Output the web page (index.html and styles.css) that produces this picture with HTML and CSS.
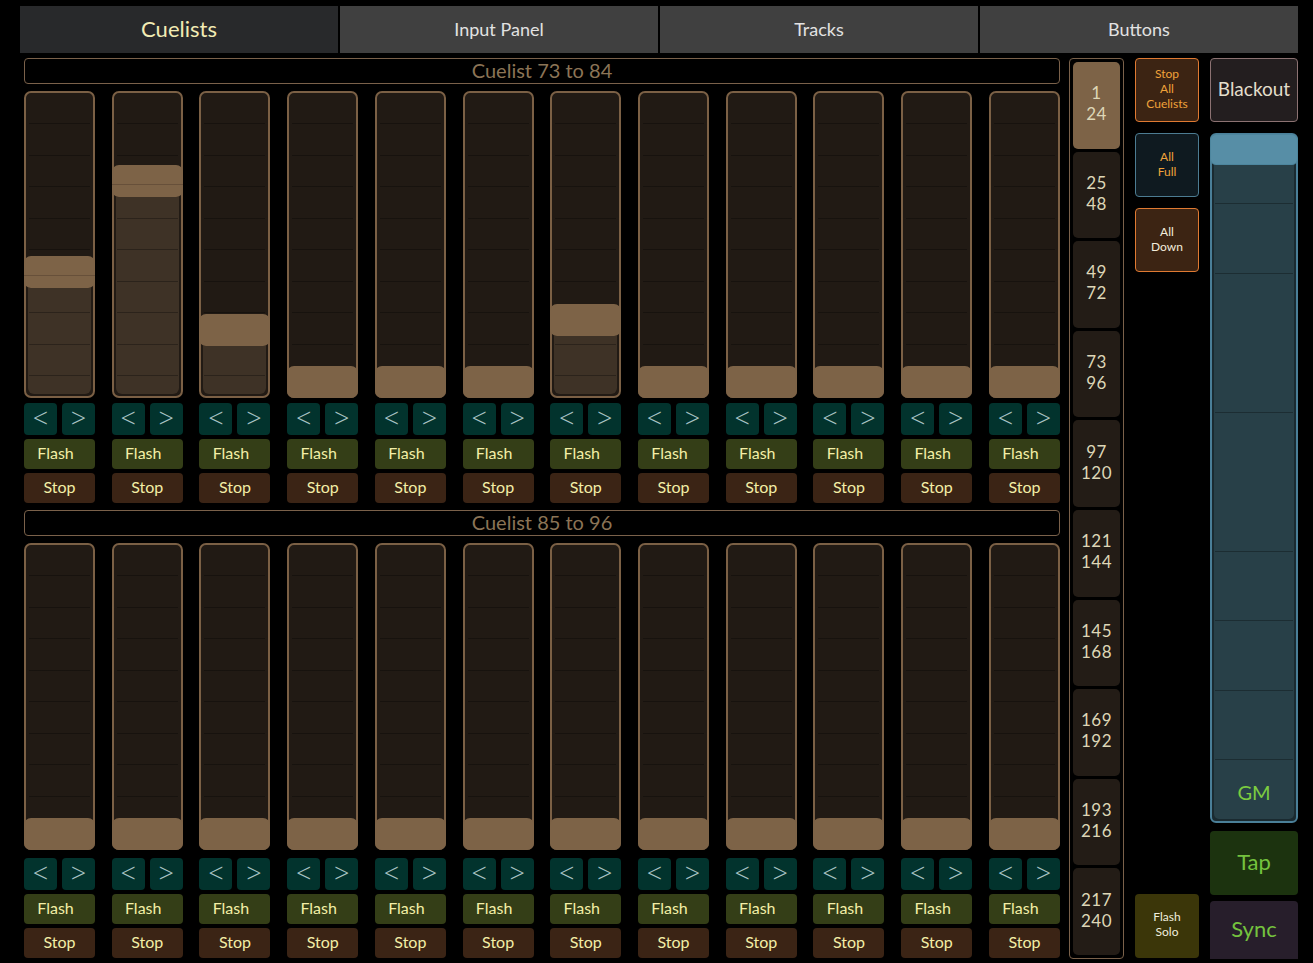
FILE: index.html
```html
<!DOCTYPE html>
<html>
<head>
<meta charset="utf-8">
<link rel="stylesheet" href="styles.css">
</head>
<body>
<div class="tabs">
  <div class="tab active">Cuelists</div>
  <div class="tab">Input Panel</div>
  <div class="tab">Tracks</div>
  <div class="tab">Buttons</div>
</div>
<div class="main">
  <div class="banks">
    <section class="bank">
      <div class="bank-title">Cuelist 73 to 84</div>
      <div class="faders">
        <div class="col"><div class="fader"><div class="handle marked"></div><div class="fill" style="height:106px"></div></div><div class="nav"><div class="btn arrow">&lt;</div><div class="btn arrow">&gt;</div></div><div class="btn flash">Flash</div><div class="btn stop">Stop</div></div>
        <div class="col"><div class="fader"><div class="handle marked"></div><div class="fill" style="height:197px"></div></div><div class="nav"><div class="btn arrow">&lt;</div><div class="btn arrow">&gt;</div></div><div class="btn flash">Flash</div><div class="btn stop">Stop</div></div>
        <div class="col"><div class="fader"><div class="handle"></div><div class="fill" style="height:48px"></div></div><div class="nav"><div class="btn arrow">&lt;</div><div class="btn arrow">&gt;</div></div><div class="btn flash">Flash</div><div class="btn stop">Stop</div></div>
        <div class="col"><div class="fader"><div class="handle end"></div></div><div class="nav"><div class="btn arrow">&lt;</div><div class="btn arrow">&gt;</div></div><div class="btn flash">Flash</div><div class="btn stop">Stop</div></div>
        <div class="col"><div class="fader"><div class="handle end"></div></div><div class="nav"><div class="btn arrow">&lt;</div><div class="btn arrow">&gt;</div></div><div class="btn flash">Flash</div><div class="btn stop">Stop</div></div>
        <div class="col"><div class="fader"><div class="handle end"></div></div><div class="nav"><div class="btn arrow">&lt;</div><div class="btn arrow">&gt;</div></div><div class="btn flash">Flash</div><div class="btn stop">Stop</div></div>
        <div class="col"><div class="fader"><div class="handle"></div><div class="fill" style="height:58px"></div></div><div class="nav"><div class="btn arrow">&lt;</div><div class="btn arrow">&gt;</div></div><div class="btn flash">Flash</div><div class="btn stop">Stop</div></div>
        <div class="col"><div class="fader"><div class="handle end"></div></div><div class="nav"><div class="btn arrow">&lt;</div><div class="btn arrow">&gt;</div></div><div class="btn flash">Flash</div><div class="btn stop">Stop</div></div>
        <div class="col"><div class="fader"><div class="handle end"></div></div><div class="nav"><div class="btn arrow">&lt;</div><div class="btn arrow">&gt;</div></div><div class="btn flash">Flash</div><div class="btn stop">Stop</div></div>
        <div class="col"><div class="fader"><div class="handle end"></div></div><div class="nav"><div class="btn arrow">&lt;</div><div class="btn arrow">&gt;</div></div><div class="btn flash">Flash</div><div class="btn stop">Stop</div></div>
        <div class="col"><div class="fader"><div class="handle end"></div></div><div class="nav"><div class="btn arrow">&lt;</div><div class="btn arrow">&gt;</div></div><div class="btn flash">Flash</div><div class="btn stop">Stop</div></div>
        <div class="col"><div class="fader"><div class="handle end"></div></div><div class="nav"><div class="btn arrow">&lt;</div><div class="btn arrow">&gt;</div></div><div class="btn flash">Flash</div><div class="btn stop">Stop</div></div>
      </div>
    </section>
    <section class="bank lower">
      <div class="bank-title">Cuelist 85 to 96</div>
      <div class="faders">
        <div class="col"><div class="fader"><div class="handle end"></div></div><div class="nav"><div class="btn arrow">&lt;</div><div class="btn arrow">&gt;</div></div><div class="btn flash">Flash</div><div class="btn stop">Stop</div></div>
        <div class="col"><div class="fader"><div class="handle end"></div></div><div class="nav"><div class="btn arrow">&lt;</div><div class="btn arrow">&gt;</div></div><div class="btn flash">Flash</div><div class="btn stop">Stop</div></div>
        <div class="col"><div class="fader"><div class="handle end"></div></div><div class="nav"><div class="btn arrow">&lt;</div><div class="btn arrow">&gt;</div></div><div class="btn flash">Flash</div><div class="btn stop">Stop</div></div>
        <div class="col"><div class="fader"><div class="handle end"></div></div><div class="nav"><div class="btn arrow">&lt;</div><div class="btn arrow">&gt;</div></div><div class="btn flash">Flash</div><div class="btn stop">Stop</div></div>
        <div class="col"><div class="fader"><div class="handle end"></div></div><div class="nav"><div class="btn arrow">&lt;</div><div class="btn arrow">&gt;</div></div><div class="btn flash">Flash</div><div class="btn stop">Stop</div></div>
        <div class="col"><div class="fader"><div class="handle end"></div></div><div class="nav"><div class="btn arrow">&lt;</div><div class="btn arrow">&gt;</div></div><div class="btn flash">Flash</div><div class="btn stop">Stop</div></div>
        <div class="col"><div class="fader"><div class="handle end"></div></div><div class="nav"><div class="btn arrow">&lt;</div><div class="btn arrow">&gt;</div></div><div class="btn flash">Flash</div><div class="btn stop">Stop</div></div>
        <div class="col"><div class="fader"><div class="handle end"></div></div><div class="nav"><div class="btn arrow">&lt;</div><div class="btn arrow">&gt;</div></div><div class="btn flash">Flash</div><div class="btn stop">Stop</div></div>
        <div class="col"><div class="fader"><div class="handle end"></div></div><div class="nav"><div class="btn arrow">&lt;</div><div class="btn arrow">&gt;</div></div><div class="btn flash">Flash</div><div class="btn stop">Stop</div></div>
        <div class="col"><div class="fader"><div class="handle end"></div></div><div class="nav"><div class="btn arrow">&lt;</div><div class="btn arrow">&gt;</div></div><div class="btn flash">Flash</div><div class="btn stop">Stop</div></div>
        <div class="col"><div class="fader"><div class="handle end"></div></div><div class="nav"><div class="btn arrow">&lt;</div><div class="btn arrow">&gt;</div></div><div class="btn flash">Flash</div><div class="btn stop">Stop</div></div>
        <div class="col"><div class="fader"><div class="handle end"></div></div><div class="nav"><div class="btn arrow">&lt;</div><div class="btn arrow">&gt;</div></div><div class="btn flash">Flash</div><div class="btn stop">Stop</div></div>
      </div>
    </section>
  </div>

  <div class="pages">
    <div class="page active"><span>1</span><span>24</span></div>
    <div class="page"><span>25</span><span>48</span></div>
    <div class="page"><span>49</span><span>72</span></div>
    <div class="page"><span>73</span><span>96</span></div>
    <div class="page"><span>97</span><span>120</span></div>
    <div class="page"><span>121</span><span>144</span></div>
    <div class="page"><span>145</span><span>168</span></div>
    <div class="page"><span>169</span><span>192</span></div>
    <div class="page"><span>193</span><span>216</span></div>
    <div class="page"><span>217</span><span>240</span></div>
  </div>

  <div class="actions">
    <div class="act stop-all">Stop<br>All<br>Cuelists</div>
    <div class="act all-full">All<br>Full</div>
    <div class="act all-down">All<br>Down</div>
    <div class="act flash-solo">Flash<br>Solo</div>
  </div>

  <div class="master">
    <div class="blackout">Blackout</div>
    <div class="gm">
      <div class="gm-handle"></div>
      <div class="gm-fill"><span>GM</span></div>
    </div>
    <div class="tap">Tap</div>
    <div class="sync">Sync</div>
  </div>
</div>
</body>
</html>
```
FILE: styles.css
```css
* { box-sizing: border-box; }
body {
  margin: 0;
  background: #000;
  width: 1313px;
  height: 963px;
  overflow: hidden;
  font-family: Lato, "Open Sans", sans-serif;
}
.tabs {
  display: flex;
  gap: 2px;
  margin: 6px 0 0 20px;
  width: 1278px;
  height: 47px;
}
.tab {
  flex: 1;
  background: #404040;
  color: #e2e2e2;
  font-size: 18px;
  display: flex;
  align-items: center;
  justify-content: center;
  padding-bottom: 2px;
}
.tab.active {
  background: #28292b;
  color: #f2ecb4;
  font-size: 22px;
}
.main {
  display: flex;
  margin: 5px 0 0 24px;
}
.banks {
  width: 1036px;
  display: flex;
  flex-direction: column;
}
.bank.lower { margin-top: 7px; }
.bank-title {
  height: 26px;
  border: 1.5px solid #7a614a;
  border-radius: 4px;
  color: #8b7456;
  font-size: 20px;
  display: flex;
  align-items: center;
  justify-content: center;
  padding-bottom: 3px;
}
.faders {
  display: flex;
  justify-content: space-between;
  margin-top: 7px;
}
.col {
  width: 71px;
  display: flex;
  flex-direction: column;
}
.fader {
  position: relative;
  height: 307px;
  border: 2px solid #7b6045;
  border-radius: 7px;
  background: #211a14;
  display: flex;
  flex-direction: column;
  justify-content: flex-end;
}
.fader::after {
  content: "";
  position: absolute;
  z-index: 1;
  left: 3px;
  right: 3px;
  top: 0;
  bottom: 6px;
  background: repeating-linear-gradient(to bottom, transparent 0, transparent 30.5px, rgba(0,0,0,0.3) 30.5px, rgba(0,0,0,0.3) 31.5px);
  pointer-events: none;
}
.handle {
  position: relative;
  z-index: 2;
  height: 32px;
  margin: 0 -2px;
  border-radius: 7px;
  background: #7d6347;
  flex: none;
}
.handle.marked {
  background: linear-gradient(to bottom, #7d6347 0, #7d6347 19.5px, #67503a 19.5px, #67503a 20.5px, #7d6347 20.5px);
}
.handle.end { margin-bottom: -2px; }
.fill {
  margin: 0 2px 2px;
  background: #3e3226;
  border-radius: 0 0 6px 6px;
  flex: none;
}
.nav {
  display: flex;
  gap: 5px;
  margin-top: 5px;
  height: 32px;
}
.lower .nav { margin-top: 8px; }
.btn {
  display: flex;
  align-items: center;
  justify-content: center;
  border-radius: 4px;
}
.arrow {
  flex: 1;
  background: #02332d;
  color: #a9c3c4;
  font-family: "Open Sans", sans-serif;
  font-size: 27px;
  font-weight: 300;
  padding-bottom: 3px;
}
.flash {
  margin-top: 4px;
  height: 30px;
  background: #343e17;
  color: #f3eea6;
  font-size: 16px;
  padding: 0 8px 3px 0;
}
.stop {
  margin-top: 4px;
  height: 30px;
  background: #3b2415;
  color: #f3eea6;
  font-size: 16px;
  padding-bottom: 4px;
}
.pages {
  margin-left: 9px;
  width: 55px;
  height: 901px;
  border: 1.5px solid #7a614a;
  border-radius: 4px;
  padding: 3px;
  display: flex;
  flex-direction: column;
  gap: 3px;
}
.page {
  flex: 1;
  background: #231c16;
  border-radius: 5px;
  color: #ddd6b6;
  font-size: 17px;
  line-height: 21px;
  letter-spacing: 0.5px;
  display: flex;
  flex-direction: column;
  align-items: center;
  justify-content: center;
  padding-bottom: 4px;
}
.page.active { background: #7d6347; }
.actions {
  margin-left: 11px;
  width: 64px;
  height: 900px;
  display: flex;
  flex-direction: column;
  gap: 11px;
}
.act {
  height: 64px;
  border-radius: 4px;
  border: 1.5px solid #e07a32;
  background: #3c2413;
  color: #f0a23a;
  font-size: 12px;
  line-height: 15px;
  display: flex;
  align-items: center;
  justify-content: center;
  text-align: center;
  padding-bottom: 3px;
}
.all-full {
  border-color: #4c7c92;
  background: #0f1a20;
}
.all-down { color: #f2ecdc; }
.flash-solo {
  margin-top: auto;
  border: none;
  background: #3b3609;
  color: #f0eede;
  padding-bottom: 4px;
}
.master {
  margin-left: 11px;
  width: 88px;
  display: flex;
  flex-direction: column;
}
.blackout {
  height: 64px;
  border: 1.5px solid #8c7272;
  border-radius: 4px;
  background: #231e1f;
  color: #e3dfcc;
  font-size: 19px;
  display: flex;
  align-items: center;
  justify-content: center;
  padding-bottom: 4px;
}
.gm {
  position: relative;
  margin-top: 11px;
  height: 690px;
  border: 2px solid #4a7f98;
  border-radius: 6px;
  background: #1a2a30;
  display: flex;
  flex-direction: column;
}
.gm::after {
  content: "";
  position: absolute;
  left: 3px;
  right: 3px;
  top: 0;
  bottom: 6px;
  background: repeating-linear-gradient(to bottom, transparent 0, transparent 68.5px, rgba(0,0,0,0.3) 68.5px, rgba(0,0,0,0.3) 69.5px);
  pointer-events: none;
}
.gm-handle {
  height: 31px;
  margin: -1px -2px 0;
  border-radius: 6px;
  background: #578ea6;
  border: 1.5px solid #4d869e;
  flex: none;
}
.gm-fill {
  flex: 1;
  margin: 0 2px 2px;
  background: #284048;
  border-radius: 0 0 5px 5px;
  display: flex;
  align-items: flex-end;
  justify-content: center;
  padding-bottom: 15px;
  color: #7ccc40;
  font-size: 20px;
}
.tap {
  margin-top: 8px;
  height: 64px;
  border-radius: 4px;
  background: #1c330f;
  color: #74c23e;
  font-size: 22px;
  display: flex;
  align-items: center;
  justify-content: center;
  padding-bottom: 3px;
}
.sync {
  margin-top: 6px;
  height: 58px;
  border-radius: 4px 4px 0 0;
  background: #271e2b;
  color: #74c23e;
  font-size: 22px;
  display: flex;
  align-items: center;
  justify-content: center;
  padding-bottom: 3px;
}
```
